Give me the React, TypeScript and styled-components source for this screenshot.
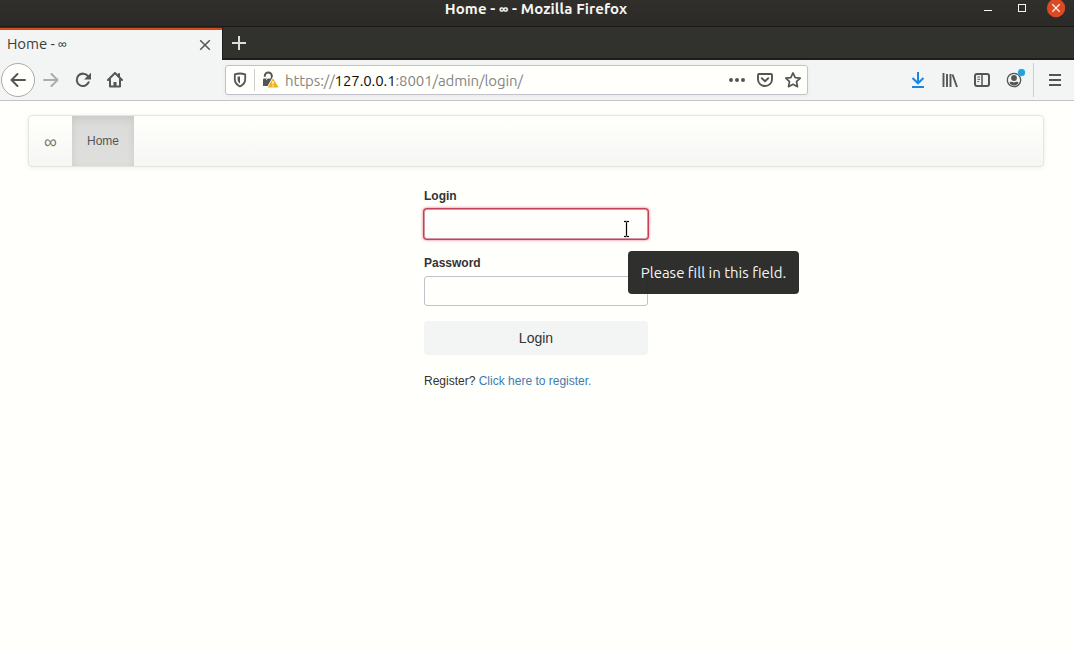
import React from 'react';
import styled, { createGlobalStyle } from 'styled-components';

const GlobalStyle = createGlobalStyle`
  * { box-sizing: border-box; }
  body { margin: 0; background: #fffffc; overflow: hidden; }
  button, input { font: inherit; }
`;

const Window = styled.div`
  height: 652px;
  display: flex;
  flex-direction: column;
  background: #fffffc;
  font-family: Ubuntu, 'Noto Sans', sans-serif;
  font-size: 15px;
`;

const TitleBar = styled.header`
  height: 27px;
  flex: none;
  display: grid;
  grid-template-columns: 1fr auto 1fr;
  background: linear-gradient(#302f2c, #2b2a28);
  border-bottom: 1px solid #1b1b18;
  color: #f5f5f3;
`;

const WindowTitle = styled.div`
  grid-column: 2;
  height: 18px;
  line-height: 18px;
  font-weight: 700;
  font-size: 15px;
  letter-spacing: 0.1px;
  padding-right: 2px;
  white-space: nowrap;
`;

const WindowControls = styled.div`
  display: flex;
  justify-content: flex-end;
  padding-right: 9px;
  svg { display: block; }
`;

const TabStrip = styled.div`
  height: 33px;
  flex: none;
  display: flex;
  background: #31312d;
`;

const Tab = styled.div`
  width: 222px;
  height: 33px;
  margin-top: 1px;
  display: flex;
  align-items: center;
  justify-content: space-between;
  padding: 0 11px 1px 7px;
  border-top: 2px solid #d9471f;
  background: #f3f5f4;
  color: #3c3c3a;
  svg { display: block; }
`;

const TabTitle = styled.span`
  line-height: 20px;
  padding-bottom: 2px;
  letter-spacing: -0.1px;
`;

const StripRest = styled.div`
  flex: 1;
  border-bottom: 2px solid #1d1d1a;
  border-left: 1px solid #1d1d1a;
  padding: 8px 0 0 8px;
`;

const Toolbar = styled.nav`
  height: 41px;
  flex: none;
  display: flex;
  align-items: center;
  background: #f3f5f4;
  border-bottom: 1px solid #c1c2ca;
  color: #555553;
`;

const NavButtons = styled.div`
  width: 225px;
  display: flex;
  align-items: center;
  padding-left: 1px;
  svg { display: block; }
`;

const BackButton = styled.div`
  width: 34px;
  height: 34px;
  border: 1px solid #aaaba8;
  border-radius: 50%;
  background: #fffffc;
  display: grid;
  place-items: center;
  margin-right: 8px;
`;

const IconSlot = styled.div<{ $width?: number; $faded?: boolean }>`
  width: ${({ $width = 32 }) => $width}px;
  display: flex;
  flex: none;
  opacity: ${({ $faded }) => ($faded ? 0.45 : 1)};
  svg { display: block; }
`;

const UrlBar = styled.div`
  width: 583px;
  height: 30px;
  display: flex;
  align-items: center;
  padding-left: 6px;
  background: #fffffc;
  border: 1px solid #c1c2ca;
  border-radius: 3px;
  box-shadow: 0 1px 4px rgba(0, 0, 0, 0.05);
`;

const Divider = styled.div<{ $height: number }>`
  width: 1px;
  height: ${({ $height }) => $height}px;
  background: #cdced1;
`;

const Address = styled.div`
  flex: 1;
  color: #858583;
  line-height: 20px;
  padding-top: 1px;
  letter-spacing: -0.1px;
  b { font-weight: 400; color: #0c0c0d; }
`;

const Actions = styled.div`
  flex: 1;
  display: flex;
  align-items: center;
  justify-content: flex-end;
  padding-right: 11px;
`;

const AccountIcon = styled.div`
  position: relative;
  width: 27px;
  svg { display: block; }
`;

const AccountBadge = styled.span`
  position: absolute;
  left: 12px;
  top: -3px;
  width: 7px;
  height: 7px;
  border-radius: 50%;
  background: #20a4dc;
  box-shadow: 0 0 1px #61ccee;
`;

const Page = styled.main`
  flex: 1;
  padding: 14px 30px 0 28px;
  background: #fffffc;
  font-family: 'Liberation Sans', Arial, sans-serif;
  font-size: 12px;
  line-height: 17px;
  color: #333;
`;

const SiteNav = styled.nav`
  height: 52px;
  display: flex;
  border: 1px solid #e3e5e1;
  border-radius: 4px;
  background: linear-gradient(#fffffc, #f6f7f4);
  box-shadow: 0 1px 5px rgba(0, 0, 0, 0.075);
`;

const Brand = styled.div`
  width: 43px;
  padding-left: 15px;
  line-height: 53px;
  font-size: 18px;
  color: #777;
`;

const NavLink = styled.div`
  width: 62px;
  line-height: 50px;
  text-align: center;
  color: #555;
  background: linear-gradient(#dbdbd9, #dfdfdd);
  box-shadow: inset 0 3px 9px rgba(0, 0, 0, 0.09);
`;

const LoginForm = styled.form`
  width: 224px;
  margin: 21px auto 0;
  display: flex;
  flex-direction: column;
`;

const Label = styled.label`
  height: 17px;
  font-weight: 700;
  margin-bottom: 4px;
`;

const Field = styled.div<{ $invalid?: boolean }>`
  position: relative;
  height: 30px;
  margin-bottom: ${({ $invalid }) => ($invalid ? 16 : 15)}px;
  input {
    display: block;
    width: 100%;
    height: 30px;
    border: 1px solid ${({ $invalid }) => ($invalid ? '#d4949f' : '#c1c3ca')};
    border-radius: 3px;
    outline: 0;
    background: #fffffc;
    box-shadow: ${({ $invalid }) => ($invalid ? '0 0 0 1px #cb4058, 0 0 3px 1px #e66b7d' : 'none')};
    caret-color: transparent;
    padding: 0 10px;
  }
`;

const Submit = styled.button`
  height: 34px;
  border: 0;
  border-radius: 4px;
  background: #f3f5f4;
  font-size: 14px;
  color: #333;
  padding: 0;
`;

const Register = styled.p`
  margin: 18px 0 0;
  a { color: #3e7cb1; text-decoration: none; }
`;

const Cursor = styled.svg`
  position: absolute;
  left: 198px;
  top: 11px;
`;

const Tooltip = styled.div`
  position: absolute;
  left: 204px;
  top: 42px;
  width: 171px;
  height: 43px;
  z-index: 2;
  border-radius: 4px;
  background: rgba(39, 39, 37, 0.96);
  color: #f5f5f2;
  font: 15px/44px Ubuntu, 'Noto Sans', sans-serif;
  text-align: center;
  white-space: nowrap;
`;

const Svg = ({ children, size = 16, w = 2 }: { children: React.ReactNode; size?: number; w?: number }) => (
  <svg width={size} height={size} viewBox="0 0 16 16" fill="none" stroke="currentColor" strokeWidth={w} strokeLinecap="round" strokeLinejoin="round">
    {children}
  </svg>
);

export default function App() {
  return (
    <Window>
      <GlobalStyle />
      <TitleBar>
        <WindowTitle>Home - ∞ - Mozilla Firefox</WindowTitle>
        <WindowControls>
          <svg width="82" height="18" viewBox="0 0 82 18" fill="none">
            <path d="M1 10.5h8" stroke="#f5f5f2" />
            <rect x="35.5" y="4.5" width="7" height="7" stroke="#f5f5f2" />
            <circle cx="73" cy="8" r="9.2" fill="#db4a22" />
            <path d="M69.3 4.3l7.4 7.4m0-7.4l-7.4 7.4" stroke="#fff3ed" strokeWidth="1.3" />
          </svg>
        </WindowControls>
      </TitleBar>
      <TabStrip>
        <Tab>
          <TabTitle>Home - ∞</TabTitle>
          <svg width="12" height="12" viewBox="0 0 12 12" stroke="#555553" strokeWidth="1.5"><path d="M1.2 1.2l9.6 9.6m0-9.6l-9.6 9.6" /></svg>
        </Tab>
        <StripRest>
          <svg width="16" height="16" viewBox="0 0 16 16" stroke="#deded9" strokeWidth="2"><path d="M8 1v14M1 8h14" /></svg>
        </StripRest>
      </TabStrip>
      <Toolbar>
        <NavButtons>
          <BackButton><Svg><path d="M15 8H1.5M7.5 2L1.5 8l6 6" /></Svg></BackButton>
          <IconSlot $faded><Svg><path d="M1 8h13.5M8.5 2l6 6-6 6" /></Svg></IconSlot>
          <IconSlot>
            <Svg><path d="M13 4.2A6.200 6.200 0 1 0 13.700 10.200" /><path d="M16 0.800v6.700H9z" fill="currentColor" stroke="none" /></Svg>
          </IconSlot>
          <IconSlot>
            <Svg><path d="M1 8l7-7 7 7" /><path d="M3 7v7.500h10V7" strokeLinecap="butt" /><path d="M8 14v-4" strokeLinecap="butt" strokeWidth="3" /><path d="M12 2v3" /></Svg>
          </IconSlot>
        </NavButtons>
        <UrlBar>
          <IconSlot $width={22}>
            <Svg w={1.8}><path d="M8 1.500c2 0 3.600.4 5.200.9v4.700c0 3.400-1.900 5.900-5.200 7.400-3.300-1.500-5.200-4-5.200-7.400V2.400C4.400 1.900 6 1.500 8 1.500z" /><path d="M8 4.500c-.9 0-1.800.1-2.400.3v2.500c0 1.900.8 3.200 2.400 4.200z" fill="currentColor" stroke="none" /></Svg>
          </IconSlot>
          <Divider $height={22} />
          <IconSlot $width={30}>
            <svg width="24" height="18" viewBox="0 0 24 18">
              <path d="M9.800 5.800V5a3.500 3.500 0 0 1 7 0v3" fill="none" stroke="#555553" strokeWidth="2" />
              <path d="M9 7.500h8.500V15H8V8.500a1 1 0 0 1 1-1z" fill="#555553" />
              <path d="M11.200 8.600l3.800-3.800" stroke="#fffffc" strokeWidth="1" />
              <path d="M17.700 6l6.300 11H11.500z" fill="#fffffc" />
              <path d="M18 7.200l5.600 9.300H12.700z" fill="#eeb21b" />
              <path d="M18 10v3.200m0 1v1.300" stroke="#fffffc" strokeWidth="1.300" />
            </svg>
          </IconSlot>
          <Address>https://<b>127.0.0.1</b>:8001/admin/login/</Address>
          <IconSlot $width={28}>
            <Svg><g fill="currentColor" stroke="none"><circle cx="2" cy="8" r="2" /><circle cx="8" cy="8" r="2" /><circle cx="14" cy="8" r="2" /></g></Svg>
          </IconSlot>
          <IconSlot $width={28}>
            <Svg w={1.9}><path d="M2 2h12a1 1 0 0 1 1 1v4.500a7 6.500 0 0 1-14 0V3a1 1 0 0 1 1-1z" /><path d="M4.800 6.200L8 9.200l3.200-3" /></Svg>
          </IconSlot>
          <IconSlot $width={22}>
            <Svg w={1.7}><path d="M8 .9l2.200 4.700 5 .6-3.700 3.500 1 5L8 12.300l-4.500 2.400 1-5L.8 6.200l5-.6z" /></Svg>
          </IconSlot>
        </UrlBar>
        <Actions>
          <IconSlot><svg width="16" height="16" viewBox="0 0 16 16" fill="none" stroke="#1986e5" strokeWidth="2"><path d="M8 0v11M2.500 6L8 11.300 13.500 6M2 15h12" /></svg></IconSlot>
          <IconSlot><svg width="16" height="16" viewBox="0 0 16 16" fill="none" stroke="currentColor" strokeWidth="1.900"><path d="M1.500 1v14M5 2v13M8.500 2v13M10.500 2.500l4.500 12.500" /></svg></IconSlot>
          <IconSlot><Svg><rect x="1" y="2" width="14" height="12" rx="2" /><path d="M8 2v12" strokeWidth="1.500" /><path d="M3.700 5h2M3.700 7.300h2M3.700 9.600h1" strokeWidth="1" /></Svg></IconSlot>
          <AccountIcon>
            <Svg w={1.3}><circle cx="8" cy="8" r="6.700" /><circle cx="8" cy="6" r="2.900" fill="currentColor" stroke="none" /><path d="M3.500 11c1-1.600 2.300-1.300 4.500-.5 2.200-.8 3.500-1.100 4.500.5-2.200 3.300-6.800 3.300-9 0z" fill="currentColor" stroke="none" /></Svg>
            <AccountBadge />
          </AccountIcon>
          <Divider $height={34} />
          <IconSlot $width={29}>
            <svg width="29" height="16" viewBox="0 0 29 16" stroke="currentColor" strokeWidth="2"><path d="M15 3h12M15 8h12M15 13h12" /></svg>
          </IconSlot>
        </Actions>
      </Toolbar>
      <Page>
        <SiteNav>
          <Brand>∞</Brand>
          <NavLink>Home</NavLink>
        </SiteNav>
        <LoginForm>
          <Label htmlFor="login">Login</Label>
          <Field $invalid>
            <input id="login" />
            <Cursor width="10" height="18" viewBox="0 0 10 18" fill="none">
              <path d="M2 1.500h2l.5 1 .5-1h2M4.500 2.500v13M2 16.500h2l.5-1 .5 1h2" stroke="#d9d9d7" strokeWidth="2.500" />
              <path d="M2 1.500h2l.5 1 .5-1h2M4.500 2.500v13M2 16.500h2l.5-1 .5 1h2" stroke="#000" />
            </Cursor>
            <Tooltip>Please fill in this field.</Tooltip>
          </Field>
          <Label htmlFor="password">Password</Label>
          <Field><input id="password" type="password" /></Field>
          <Submit type="button">Login</Submit>
          <Register>Register? <a href="#register">Click here to register.</a></Register>
        </LoginForm>
      </Page>
    </Window>
  );
}
